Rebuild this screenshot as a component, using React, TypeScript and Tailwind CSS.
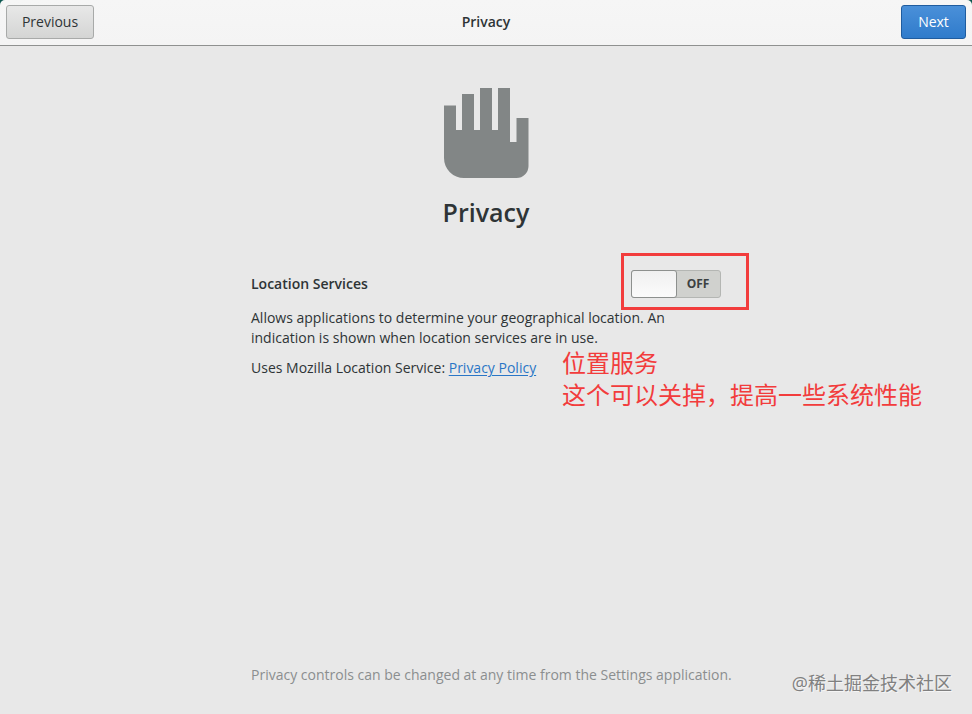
import { useState } from 'react';
import { clsx } from 'clsx';

function HandIcon() {
    return (
        <svg width="85" height="91" viewBox="0 0 85 91" fill="#828686" aria-hidden="true">
            <path d="M0 18.5H12V43H18V7H30V43H36V1H48V43H54V1H66V55H72.5V31H84.5V79A12 12 0 0 1 72.5 91H20A20 20 0 0 1 0 71Z" />
        </svg>
    );
}

interface LocationSwitchProps {
    checked: boolean;
    onChange: (checked: boolean) => void;
}

function LocationSwitch({ checked, onChange }: LocationSwitchProps) {
    return (
        <button
            type="button"
            role="switch"
            aria-checked={checked}
            aria-labelledby="location-label"
            onClick={() => onChange(!checked)}
            className={clsx(
                'flex h-7 w-[90px] rounded-[3px] border text-xs font-bold',
                checked
                    ? 'flex-row-reverse border-[#1c5187] bg-[#4a90d9] text-white'
                    : 'border-[#b4b6b3] bg-[#d0d1ce] text-[#3c4142]'
            )}
        >
            <span className="-m-px h-7 w-[46px] shrink-0 rounded-[3px] border border-[#8d908e] bg-linear-to-b from-[#f0f0f0] to-[#fbfbfb]" />
            <span className="flex h-full flex-1 items-center justify-center">{checked ? 'ON' : 'OFF'}</span>
        </button>
    );
}

export default function App() {
    const [location, setLocation] = useState(false);

    return (
        <div className="relative flex min-h-screen flex-col bg-[#0d5750] font-['Open_Sans','Noto_Sans_CJK_SC',sans-serif] text-sm text-[#2e3436]">
            <header className="grid grid-cols-[1fr_auto_1fr] items-center rounded-t-[5px] border-b border-[#8f9190] bg-linear-to-b from-[#f6f6f6] to-[#f4f4f4] px-1.5 pt-[5px] pb-1.5">
                <button
                    type="button"
                    className="h-[34px] w-[88px] justify-self-start rounded-[3px] border border-[#a8aaa9] bg-linear-to-b from-[#e8e8e8] to-[#d4d5d4]"
                >
                    Previous
                </button>
                <h1 className="font-semibold">Privacy</h1>
                <button
                    type="button"
                    className="h-[34px] w-[65px] justify-self-end rounded-[3px] border border-[#1f5c9f] bg-linear-to-b from-[#4a90d9] to-[#2f7bcb] text-white"
                >
                    Next
                </button>
            </header>

            <main className="flex flex-1 flex-col items-center bg-[#e8e8e8] px-4 pt-[41px] pb-[29px]">
                <HandIcon />
                <h2 className="mt-4 text-[25px] leading-9 font-semibold">Privacy</h2>

                <section className="mt-10 w-full max-w-[470px]">
                    <div className="flex items-center justify-between">
                        <h3 id="location-label" className="font-semibold">
                            Location Services
                        </h3>
                        <div className="relative">
                            <LocationSwitch checked={location} onChange={setLocation} />
                            <div className="pointer-events-none absolute -top-[17px] -left-[10px] h-[57px] w-32 border-3 border-[#f23c3c]" />
                        </div>
                    </div>
                    <div className="relative mt-2.5">
                        <p className="max-w-[420px]">
                            Allows applications to determine your geographical location. An indication is shown when
                            location services are in use.
                        </p>
                        <p className="mt-2.5">
                            Uses Mozilla Location Service:{' '}
                            <a href="#privacy-policy" className="text-[#2a76c6] underline underline-offset-2">
                                Privacy Policy
                            </a>
                        </p>
                        <p className="pointer-events-none absolute top-[39px] left-[311px] text-2xl leading-8 whitespace-nowrap text-[#f23c3c]">
                            位置服务
                            <br />
                            这个可以关掉，提高一些系统性能
                        </p>
                    </div>
                </section>

                <p className="mt-auto w-full max-w-[470px] whitespace-nowrap text-[#8b8e8f]">
                    Privacy controls can be changed at any time from the Settings application.
                </p>
            </main>

            <p className="absolute right-5 bottom-[19px] text-lg leading-6 text-[#808080] [text-shadow:1px_1px_0_#f5f5f5]">
                @稀土掘金技术社区
            </p>
        </div>
    );
}
